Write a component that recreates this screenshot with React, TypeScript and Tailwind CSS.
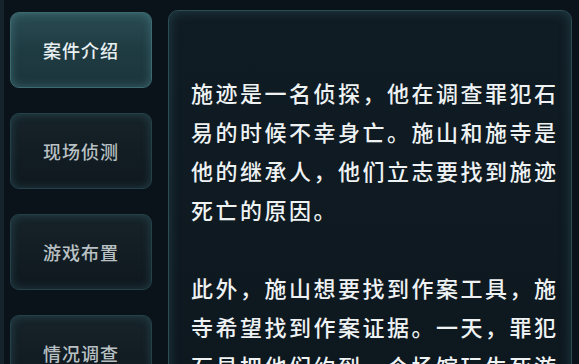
const tabs = ["案件介绍", "现场侦测", "游戏布置", "情况调查"];

const story = [
  "施迹是一名侦探，他在调查罪犯石易的时候不幸身亡。施山和施寺是他的继承人，他们立志要找到施迹死亡的原因。",
  "此外，施山想要找到作案工具，施寺希望找到作案证据。一天，罪犯石易把他们约到一个场馆玩生死游戏。",
];

const font = { fontFamily: '"Noto Sans CJK SC", "Noto Sans", sans-serif' };

const App = () => {
  return (
    <div
      className="flex h-[364px] w-[579px] overflow-hidden bg-[#0b131a]"
      style={font}
    >
      {/* Side tabs */}
      <div className="flex w-[160px] shrink-0 flex-col gap-[25px] border-l-[4px] border-[#15242b] pl-[6px] pt-[12px]">
        {tabs.map((tab, i) => (
          <button
            key={tab}
            className={
              i === 0
                ? "flex h-[76px] w-[142px] shrink-0 items-center justify-center rounded-[9px] border border-[#3d6a70] bg-gradient-to-b from-[#2a4c53] via-[#1f3b42] to-[#1c353c] text-[18px] font-medium tracking-[1px] text-[#e9f0f1] shadow-[inset_0_0_10px_rgba(110,180,190,0.35)]"
                : "flex h-[76px] w-[142px] shrink-0 items-center justify-center rounded-[9px] border border-[#24414a] bg-gradient-to-b from-[#162329] to-[#0f181e] text-[18px] font-medium tracking-[1px] text-[#b9c1c4] shadow-[inset_0_0_10px_rgba(80,150,160,0.3)]"
            }
          >
            {tab}
          </button>
        ))}
      </div>

      {/* Story panel */}
      <div className="ml-[8px] mr-[7px] mt-[10px] h-[400px] flex-1 rounded-t-[10px] border border-[#2c4c53] bg-gradient-to-b from-[#101c24] to-[#0d171e] pl-[22px] pr-[12px] pt-[62px] shadow-[inset_0_0_12px_rgba(70,130,140,0.35)]">
        <div className="flex flex-col gap-[39px] text-[22px] font-medium leading-[39px] tracking-[2.5px] text-[#eef2f3]">
          {story.map((p, i) => (
            <p key={i}>{p}</p>
          ))}
        </div>
      </div>
    </div>
  );
};

export default App;
